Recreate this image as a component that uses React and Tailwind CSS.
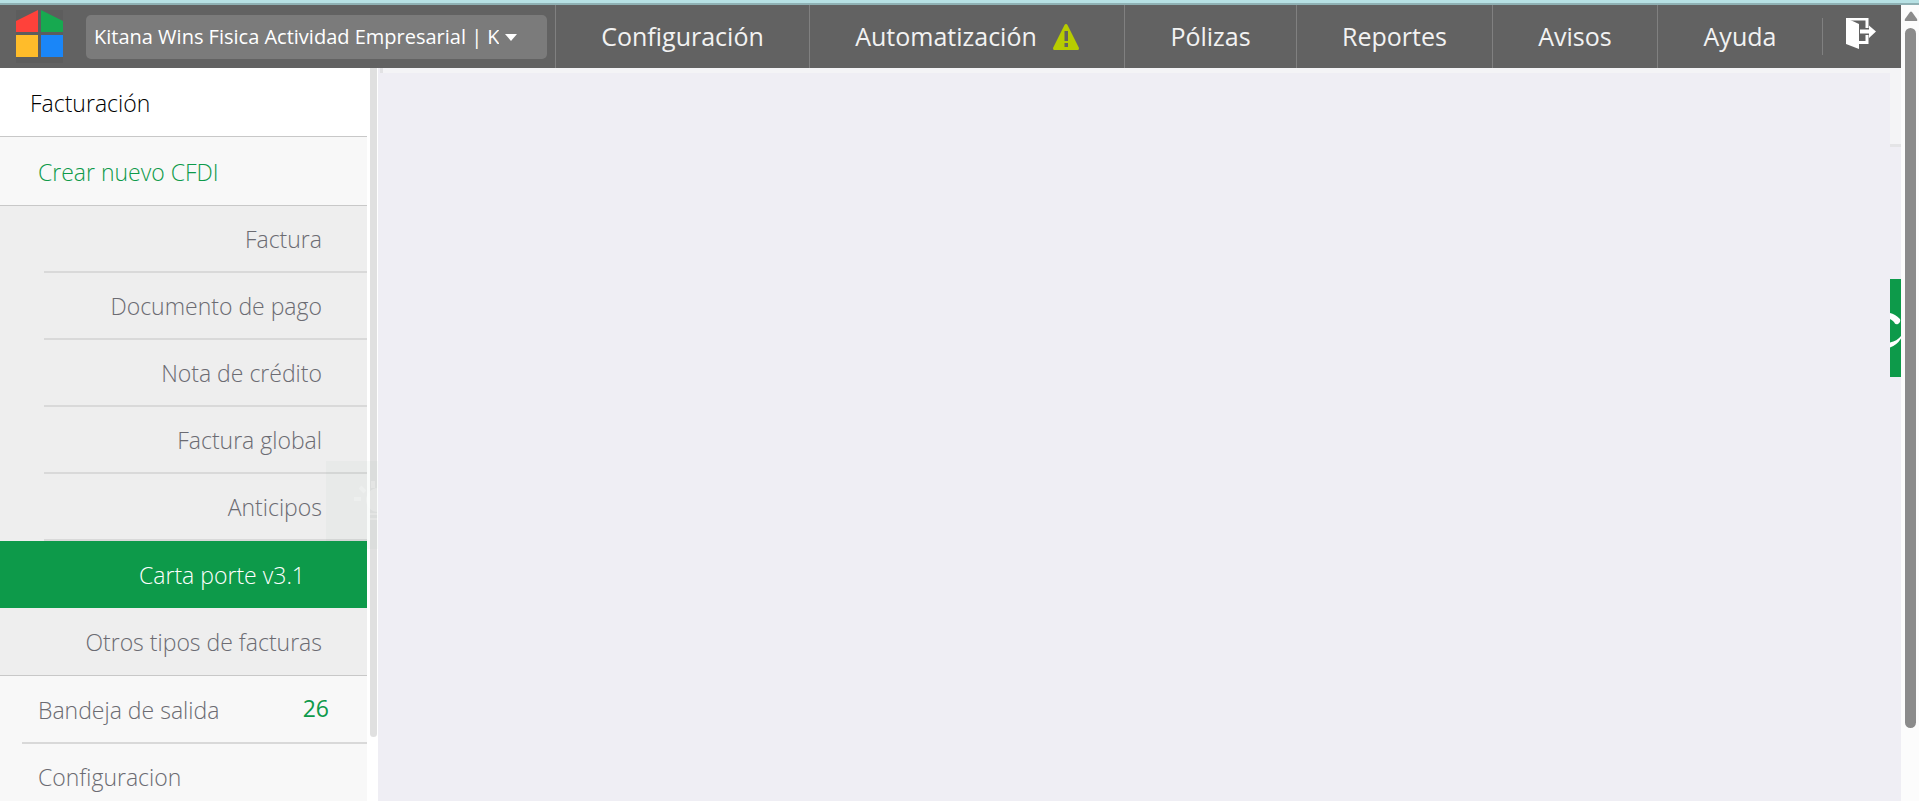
import React, { useState } from "react";

const navItems = [
  { label: "Configuración", className: "w-[254px]" },
  { label: "Automatización", className: "w-[315px]", warning: true },
  { label: "Pólizas", className: "w-[172px]" },
  { label: "Reportes", className: "w-[196px]" },
  { label: "Avisos", className: "w-[165px]" },
  { label: "Ayuda", className: "w-[165px]" },
];

const subItems = [
  "Factura",
  "Documento de pago",
  "Nota de crédito",
  "Factura global",
  "Anticipos",
];

const Logo = () => (
  <svg width="47" height="53" viewBox="0 0 47 53" className="shrink-0">
    <rect width="47" height="53" fill="#5d5d5d" />
    <path d="M0 11 22 0v22H0z" fill="#ff413a" />
    <path d="M25 0 47 11v11H25z" fill="#17a950" />
    <path d="M0 25h22v22H0z" fill="#ffbc2a" />
    <path d="M25 25h22v22H25z" fill="#1a86f8" />
  </svg>
);

const WarningIcon = () => (
  <svg width="26" height="26" viewBox="0 0 26 26">
    <path d="M13 0q1 0 1.500 1L26 24q0 2-1 2H1q-1 0-1-2L11.500 1Q12 0 13 0z" fill="#b7cc00" />
    <path d="M11.500 7h3.500v10h-3.500zM11.500 19h3.500v4h-3.500z" fill="#626262" />
  </svg>
);

const ExitIcon = () => (
  <svg width="30" height="32" viewBox="0 0 30 32" fill="#fff">
    <path d="M0 0 13 6V31L0 26z" />
    <path d="M0 0h22.500v10H19.500V2.500H5L0 1zM13 23h6.500V17h3v9H13z" />
    <path d="M14 11.500h9V7.500l7 6-7 6.500v-4.500h-9z" />
  </svg>
);

const App = () => {
  const [company, setCompany] = useState("kitana");
  const [active, setActive] = useState("Carta porte v3.1");

  return (
    <div className="h-screen flex flex-col overflow-hidden bg-[#efeef4] font-['Open_Sans',sans-serif]">
      <div className="h-[5px] shrink-0 bg-[#b7e1e4] border-b-2 border-[#8fb1b4]" />

      <div className="flex flex-1 min-h-0">
        <div className="flex-1 min-w-0 flex flex-col">
          {/* Top bar */}
          <header className="h-[63px] shrink-0 bg-[#626262] flex items-center">
            <a href="#" aria-label="Inicio" className="ml-4">
              <Logo />
            </a>
            <div className="relative ml-[23px] mr-2 flex-1 min-w-0">
              <select
                aria-label="Empresa"
                value={company}
                onChange={(e) => setCompany(e.target.value)}
                className="block w-full h-11 pl-2 pr-12 appearance-none rounded-[5px] bg-[#7b7b7b] text-white text-[20px] overflow-hidden"
              >
                <option value="kitana">
                  Kitana Wins Fisica Actividad Empresarial | Kitana
                </option>
              </select>
              <svg
                width="12"
                height="7"
                viewBox="0 0 12 7"
                className="absolute right-[30px] top-[19px] pointer-events-none"
              >
                <path d="M0 0h12L6 7z" fill="#fff" />
              </svg>
            </div>

            <nav className="flex h-full">
              {navItems.map((item) => (
                <a
                  key={item.label}
                  href="#"
                  className={`${item.className} h-full flex items-center justify-center gap-4 text-[#f2f2f2] text-[25px] border-l border-[#808080]`}
                >
                  {item.label}
                  {item.warning && <WarningIcon />}
                </a>
              ))}
            </nav>
            <div className="w-[79px] h-[37px] pl-[23px] flex items-start border-l border-[#808080]">
              <button type="button" aria-label="Salir">
                <ExitIcon />
              </button>
            </div>
          </header>

          <div className="flex flex-1 min-h-0">
            {/* Sidebar */}
            <aside className="relative w-[378px] shrink-0 flex overflow-hidden bg-white">
              <nav className="w-[367px] text-[23px] font-light text-[#6b6b72]">
                <a
                  href="#"
                  className="h-[69px] pt-[2px] flex items-center pl-[30px] bg-white text-black border-b border-[#c8c8c8]"
                >
                  Facturación
                </a>
                <a
                  href="#"
                  className="h-[69px] pt-[2px] flex items-center pl-[38px] bg-[#f8f8f8] text-[#0d9a4a] border-b border-[#c8c8c8]"
                >
                  Crear nuevo CFDI
                </a>
                <div className="bg-[#eeeeee] border-b border-[#c8c8c8]">
                  {subItems.map((item) => (
                    <a
                      key={item}
                      href="#"
                      onClick={() => setActive(item)}
                      className="h-[67px] ml-11 pt-[2px] pr-[45px] flex items-center justify-end border-b-2 border-[#d9d9d9]"
                    >
                      {item}
                    </a>
                  ))}
                  <a
                    href="#"
                    aria-current={active === "Carta porte v3.1" ? "page" : undefined}
                    className="h-[67px] pt-[2px] pr-[62px] flex items-center justify-end bg-[#0d9a4a] text-white"
                  >
                    Carta porte v3.1
                  </a>
                  <a
                    href="#"
                    className="h-[67px] pt-[2px] pr-[45px] flex items-center justify-end"
                  >
                    Otros tipos de facturas
                  </a>
                </div>
                <div className="bg-[#f8f8f8]">
                  <a
                    href="#"
                    className="h-[68px] ml-[22px] pt-[2px] pl-4 pr-[38px] flex items-center justify-between border-b-2 border-[#d9d9d9]"
                  >
                    Bandeja de salida
                    <span className="pb-1 font-normal text-[#0d9a4a]">26</span>
                  </a>
                  <a href="#" className="h-[67px] pl-[38px] flex items-center">
                    Configuracion
                  </a>
                </div>
              </nav>
              <div className="ml-[3px] w-[7px] h-[669px] rounded-b bg-[#e0e0e0]" />

              {/* Faded tips button */}
              <div className="absolute left-[326px] top-[393px] w-[52px] h-[88px] overflow-hidden bg-[#3f7a58]/3">
                <svg width="90" height="88" viewBox="0 0 90 88" className="max-w-none opacity-25">
                  <g stroke="#fff" strokeWidth="4" fill="#fff">
                    <path d="M47 20v7M34 26l5 5M28 38h7" />
                    <circle cx="52" cy="39" r="12" stroke="none" />
                    <path d="M43 53h10M44 58h8" strokeWidth="2" />
                  </g>
                </svg>
              </div>
            </aside>

            <main className="flex-1 min-w-0 flex flex-col">
              <div className="h-[5px] ml-[2px] bg-[#f4f4f6] border-l-[3px] border-[#e2e2e4]" />
              <div className="self-end w-[11px] h-[74px] bg-[#f4f4f6] border-b-[3px] border-[#e4e4e6]" />
              <button
                type="button"
                aria-label="Soporte"
                className="self-end mt-[132px] w-[11px] h-[98px] bg-[#0d9a4a] overflow-hidden"
              >
                <svg width="11" height="98" viewBox="0 0 11 98">
                  <path d="M0 34Q5 35 10 40Q11 43 8 45Q5 46 4 43Q2 41 0 40zM0 63.500Q7 62 11 57v2.500Q7 66 0 68.500z" fill="#fff" />
                </svg>
              </button>
            </main>
          </div>
        </div>

        {/* Page scroll track */}
        <div className="w-[18px] shrink-0 flex flex-col items-center bg-[#fcfcfc]">
          <svg width="14" height="10" viewBox="0 0 14 10" className="mt-[6px] ml-px shrink-0">
            <path d="M6 1Q7 0 8 1l5 7q1 2-1 2H2Q0 10 1 8z" fill="#8b8b8b" />
          </svg>
          <div className="mt-[7px] w-[11px] h-[700px] rounded-full bg-[#8b8b8b]" />
        </div>
      </div>
    </div>
  );
};

export default App;
